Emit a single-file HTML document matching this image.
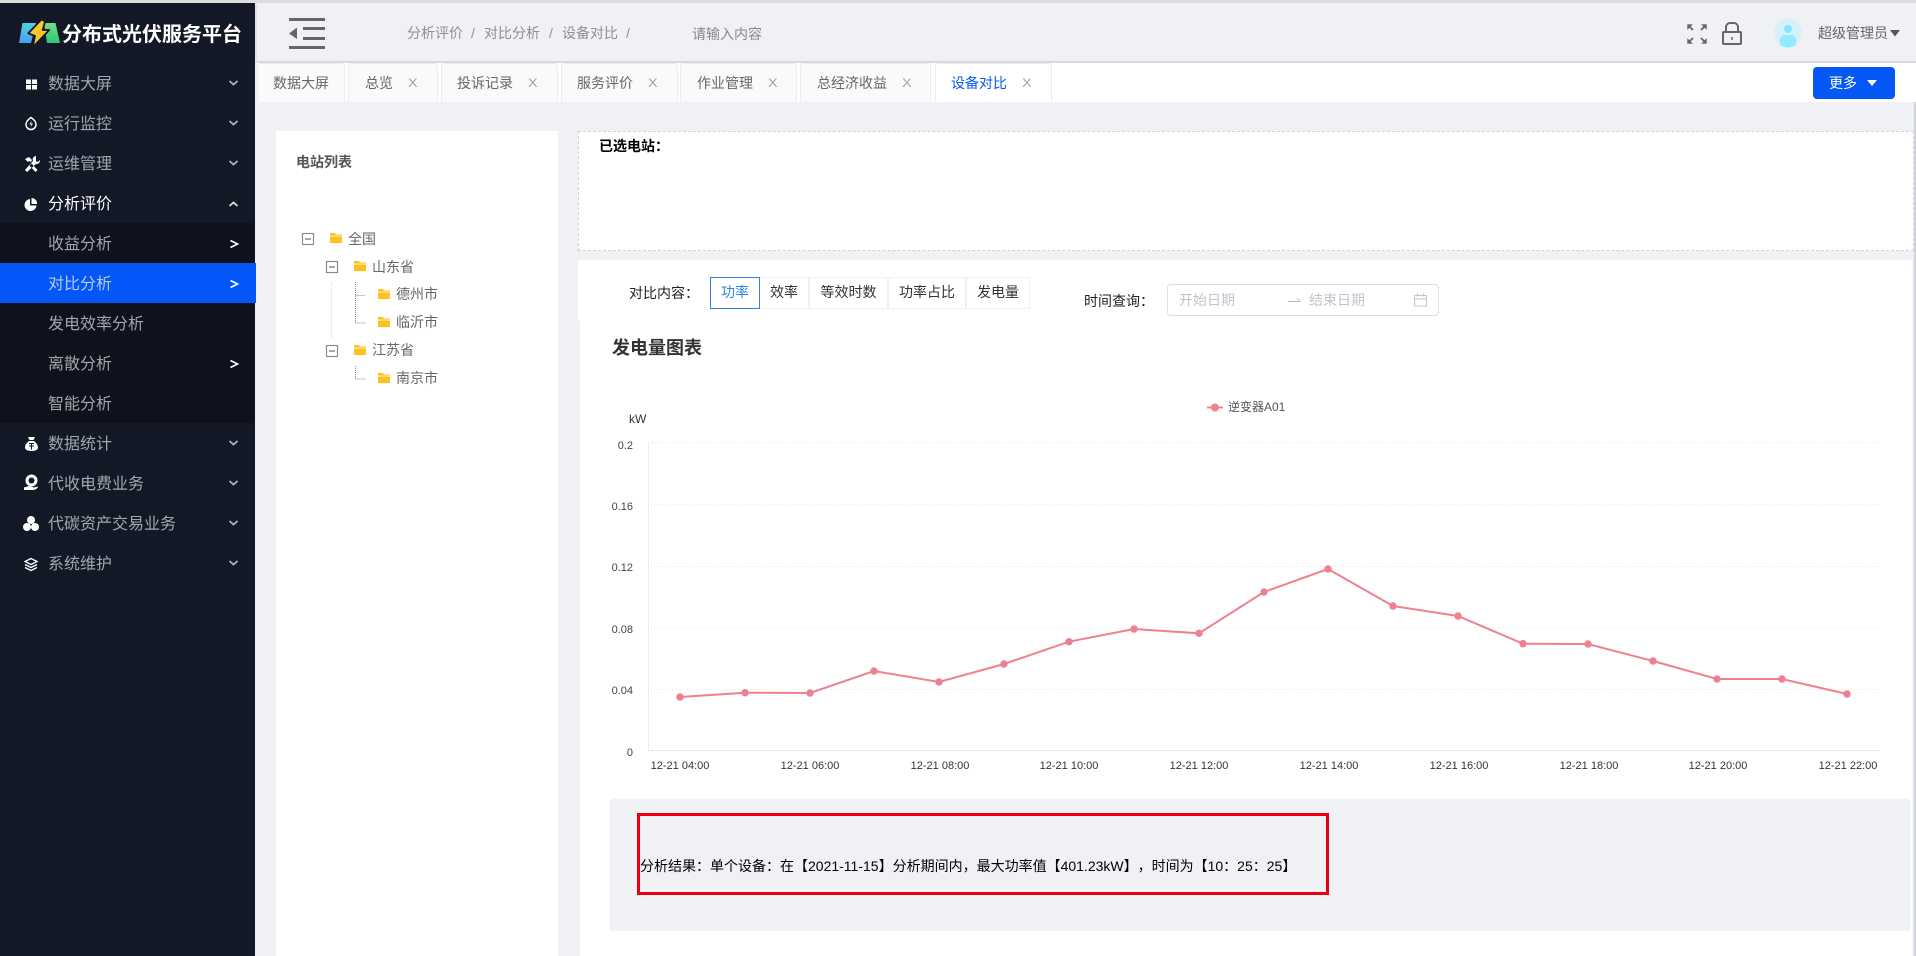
<!DOCTYPE html>
<html lang="zh-CN">
<head>
<meta charset="utf-8">
<title>设备对比</title>
<style>
*{box-sizing:border-box}
html,body{margin:0;padding:0;width:1916px;height:956px;overflow:hidden;background:#f0f1f5;font-family:"Liberation Sans","Noto Sans CJK SC",sans-serif;font-size:14px;color:#333;text-spacing-trim:space-all}
.a{position:absolute;white-space:nowrap}
.t{position:absolute;white-space:nowrap;line-height:20px;height:20px}
svg{position:absolute;display:block;overflow:visible}
.menu{color:#a3a6ab;font-size:16px;left:48px}
.tab{position:absolute;top:63px;height:39px;background:#fafafa;border:1px solid #ececec;border-bottom:0;border-radius:3px 3px 0 0}
.tabt{color:#666;top:73px}
.x{color:#a0a0a0;font-size:12px;top:73px;transform:scaleX(1.2);transform-origin:left center}
.tree{color:#666}
.seg{position:absolute;top:277px;height:32px;border:1px solid #eff0f4;background:#fff;color:#333;text-align:center;line-height:29px}
</style>
</head>
<body>
<!-- top bars -->
<div class="a" style="left:0;top:0;width:1916px;height:3px;background:#dcdcdc"></div>
<div class="a" style="left:255px;top:3px;width:2px;height:60px;background:#e2e2e2"></div>
<div class="a" style="left:257px;top:61px;width:1659px;height:2px;background:#d9d9d9"></div>
<div class="a" style="left:257px;top:63px;width:1659px;height:39px;background:#fff"></div>

<!-- sidebar -->
<div class="a" style="left:0;top:3px;width:255px;height:953px;background:#131826"></div>
<div class="a" style="left:0;top:223px;width:255px;height:200px;background:#0f121c"></div>
<div class="a" style="left:0;top:263px;width:256px;height:40px;background:#0356f7"></div>

<svg style="left:18px;top:17px" width="44" height="32" viewBox="0 0 44 32">
  <defs><linearGradient id="b" x1="0" y1="0" x2="0" y2="1"><stop offset="0" stop-color="#4fd2e4"/><stop offset="1" stop-color="#4b9df2"/></linearGradient>
  <linearGradient id="g" x1="0" y1="0" x2="0" y2="1"><stop offset="0" stop-color="#6fe08c"/><stop offset="1" stop-color="#2fc873"/></linearGradient></defs>
  <path d="M4.500 6H18L13 26H1Z" fill="url(#b)"/>
  <path d="M26 6H37.500L42 26H29Z" fill="url(#g)"/>
  <path d="M23.700 2.300L10.300 16.300L17 19L14.700 30.300L31.300 13H24.700L27 4.700Z" fill="#fdc72c" stroke="#131826" stroke-width="1.800" stroke-linejoin="round"/>
</svg>
<div class="t" style="left:62px;top:25px;color:#fff;font-size:20px;font-weight:bold">分布式光伏服务平台</div>

<div class="t menu" style="top:75px">数据大屏</div>
<div class="t menu" style="top:115px">运行监控</div>
<div class="t menu" style="top:155px">运维管理</div>
<div class="t menu" style="top:195px;color:#fff">分析评价</div>
<div class="t menu" style="top:235px">收益分析</div>
<div class="t menu" style="top:275px;color:#b5cdf7">对比分析</div>
<div class="t menu" style="top:315px">发电效率分析</div>
<div class="t menu" style="top:355px">离散分析</div>
<div class="t menu" style="top:395px">智能分析</div>
<div class="t menu" style="top:435px">数据统计</div>
<div class="t menu" style="top:475px">代收电费业务</div>
<div class="t menu" style="top:515px">代碳资产交易业务</div>
<div class="t menu" style="top:555px">系统维护</div>

<!-- sidebar icons -->
<svg style="left:0;top:0" width="255" height="600" viewBox="0 0 255 600" fill="#fff">
  <rect x="26" y="79.500" width="5" height="4.500"/><rect x="32" y="79.500" width="5" height="4.500"/><rect x="26" y="85" width="5" height="4.500"/><rect x="32" y="85" width="5" height="4.500"/>
  <path d="M31 117.500c-3 2-5 4.500-5 7a5 5 0 0 0 10 0c0-2.500-2-5-5-7z" fill="none" stroke="#fff" stroke-width="1.500"/>
  <path d="M31.500 120.500l-2 4h2l-1 3 2.500-4h-2z"/>
  <path d="M25 159l4-2 3 3-1 2-2-1-1 1-3-3zM31.500 163.500l6 6.500-2 2-6-6.500zM36 156a3.500 3.500 0 0 0-3 5l-8 9 2 2 9-8a3.500 3.500 0 0 0 4-4l-2 2-2-1 0-2z"/>
  <path d="M30 199a6 6 0 1 0 6.500 6.500H30zM31.500 198v6H37a5.500 5.500 0 0 0-5.500-6z"/>
  <path d="M28 437h7l-1.500 3h-4zM29 441h5c2 1.500 4 4 4 6.500 0 2-2 3.500-6.500 3.500S25 449.500 25 447.500c0-2.500 2-5 4-6.500z"/>
  <path d="M29 443.500h5M29 446h5M31.500 443.500v6" stroke="#131826" stroke-width="1" fill="none"/>
  <circle cx="31.500" cy="480.500" r="6"/>
  <circle cx="31.500" cy="480.500" r="3" fill="#131826"/>
  <path d="M24 487.500l5-1.500 5 1.500 4-1c0 2-3 3.500-5.500 3.500H24z"/>
  <circle cx="31" cy="520" r="4"/><circle cx="27" cy="527" r="4"/><circle cx="35" cy="527" r="4"/>
  <g fill="none" stroke="#fff" stroke-width="1.300">
    <path d="M31 558.500l6 3-6 3-6-3z"/><path d="M25 564.500l6 3 6-3"/><path d="M25 567.500l6 3 6-3"/>
  </g>
  <g fill="none" stroke="#b0b2b6" stroke-width="1.800">
    <path d="M229.500 81l4 3.500 4-3.500"/><path d="M229.500 121l4 3.500 4-3.500"/><path d="M229.500 161l4 3.500 4-3.500"/>
    <path d="M229.500 206l4-3.500 4 3.500" stroke="#ddd"/>
    <path d="M229.500 441l4 3.500 4-3.500"/><path d="M229.500 481l4 3.500 4-3.500"/><path d="M229.500 521l4 3.500 4-3.500"/><path d="M229.500 561l4 3.500 4-3.500"/>
  </g>
  <g fill="none" stroke="#fff" stroke-width="1.600">
    <path d="M230.500 240.500l7 3.500-7 3.500"/><path d="M230.500 280.500l7 3.500-7 3.500"/><path d="M230.500 360.500l7 3.500-7 3.500"/>
  </g>
</svg>

<!-- header -->
<svg style="left:289px;top:17px" width="36" height="32" viewBox="0 0 36 32" fill="#666">
  <rect x="0" y="1" width="36" height="3"/><rect x="14" y="10" width="22" height="3"/><rect x="14" y="20" width="22" height="3"/><rect x="0" y="29" width="36" height="3"/>
  <path d="M8 10.500V22L0 16.500z"/>
</svg>
<div class="t" style="left:407px;top:23px;color:#8d8f94">分析评价</div>
<div class="t" style="left:471px;top:23px;color:#8d8f94">/</div>
<div class="t" style="left:484px;top:23px;color:#8d8f94">对比分析</div>
<div class="t" style="left:549px;top:23px;color:#8d8f94">/</div>
<div class="t" style="left:562px;top:23px;color:#8d8f94">设备对比</div>
<div class="t" style="left:626px;top:23px;color:#8d8f94">/</div>
<div class="t" style="left:692px;top:24px;color:#888">请输入内容</div>

<svg style="left:1687px;top:24px" width="20" height="20" viewBox="0 0 20 20" fill="#666" stroke="#666" stroke-width="1.800">
  <path d="M1 1l5 5M19 1l-5 5M1 19l5-5M19 19l-5-5" fill="none"/>
  <path d="M0.500 0.500h5l-5 5zM19.500 0.500h-5l5 5zM0.500 19.500h5l-5-5zM19.500 19.500h-5l5-5z" stroke-width=".4"/>
</svg>
<svg style="left:1722px;top:22px" width="20" height="23" viewBox="0 0 20 23" fill="none" stroke="#666" stroke-width="2">
  <rect x="1" y="10" width="18" height="12" rx="1"/>
  <path d="M4 10V5a4 4 0 0 1 4-4h4a4 4 0 0 1 4 4v5"/>
  <path d="M10 15v3" stroke-width="1.500"/>
</svg>
<svg style="left:1774px;top:19px" width="28" height="28" viewBox="0 0 28 28">
  <circle cx="14" cy="14" r="14" fill="#d5f0f8"/>
  <circle cx="14" cy="10" r="4" fill="#86e6fe"/>
  <path d="M6 26v-6a5 5 0 0 1 5-4h6a5 5 0 0 1 5 4v6a14 14 0 0 1-16 0z" fill="#93eaff"/>
</svg>
<div class="t" style="left:1818px;top:23px;color:#666">超级管理员</div>
<svg style="left:1890px;top:30px" width="10" height="7" viewBox="0 0 10 7"><path d="M0 0h10L5 6.500z" fill="#555"/></svg>

<!-- tabs -->
<div class="tab" style="left:257px;width:88px"></div>
<div class="t tabt" style="left:273px">数据大屏</div>
<div class="tab" style="left:348px;width:90px"></div>
<div class="t tabt" style="left:365px">总览</div><div class="t x" style="left:408px">X</div>
<div class="tab" style="left:441px;width:117px"></div>
<div class="t tabt" style="left:457px">投诉记录</div><div class="t x" style="left:528px">X</div>
<div class="tab" style="left:561px;width:117px"></div>
<div class="t tabt" style="left:577px">服务评价</div><div class="t x" style="left:648px">X</div>
<div class="tab" style="left:680px;width:117px"></div>
<div class="t tabt" style="left:697px">作业管理</div><div class="t x" style="left:768px">X</div>
<div class="tab" style="left:800px;width:131px"></div>
<div class="t tabt" style="left:817px">总经济收益</div><div class="t x" style="left:902px">X</div>
<div class="tab" style="left:935px;width:117px;background:#fff"></div>
<div class="t tabt" style="left:951px;color:#0558f5">设备对比</div><div class="t x" style="left:1022px">X</div>

<div class="a" style="left:1813px;top:67px;width:82px;height:32px;background:#0558f5;border-radius:4px"></div>
<div class="t" style="left:1829px;top:73px;color:#fff">更多</div>
<svg style="left:1867px;top:80px" width="10" height="7" viewBox="0 0 10 7"><path d="M0 0h10L5 6z" fill="#fff"/></svg>

<!-- scrollbar -->
<div class="a" style="left:1914px;top:102px;width:2px;height:854px;background:#cfd2d6"></div>

<!-- tree panel -->
<div class="a" style="left:276px;top:131px;width:282px;height:825px;background:#fff"></div>
<div class="t" style="left:296px;top:152px;color:#555;font-weight:bold">电站列表</div>

<svg style="left:0;top:0" width="600" height="400" viewBox="0 0 600 400">
  <g fill="#fff" stroke="#8a8a8a" stroke-width="1.200">
    <rect x="302.500" y="233.500" width="11" height="11"/>
    <rect x="326.500" y="261.500" width="11" height="11"/>
    <rect x="326.500" y="345.500" width="11" height="11"/>
  </g>
  <g stroke="#8a8a8a" stroke-width="1.500">
    <path d="M305 239h6M329 267h6M329 351h6"/>
  </g>
  <g fill="#fdc21f">
    <path d="M330 233h5l1 1.500h6V243h-12z"/>
    <path d="M354 261h5l1 1.500h6V271h-12z"/>
    <path d="M378 289h5l1 1.500h6V299h-12z"/>
    <path d="M378 317h5l1 1.500h6V327h-12z"/>
    <path d="M354 345h5l1 1.500h6V355h-12z"/>
    <path d="M378 373h5l1 1.500h6V383h-12z"/>
  </g>
  <g stroke="#fff" stroke-width=".8">
    <path d="M330 236h12M354 264h12M378 292h12M378 320h12M354 348h12M378 376h12"/>
  </g>
  <g fill="none" stroke-width="1" stroke-dasharray="1 1">
    <path d="M331.500 282v56" stroke="#d8d8d8"/>
    <path d="M355.500 282v41h10M355.500 295.500h10M355.500 366v13h10" stroke="#888"/>
  </g>
</svg>
<div class="t tree" style="left:348px;top:229px">全国</div>
<div class="t tree" style="left:372px;top:257px">山东省</div>
<div class="t tree" style="left:396px;top:284px">德州市</div>
<div class="t tree" style="left:396px;top:312px">临沂市</div>
<div class="t tree" style="left:372px;top:340px">江苏省</div>
<div class="t tree" style="left:396px;top:368px">南京市</div>

<!-- selected -->
<div class="a" style="left:578px;top:131px;width:1336px;height:120px;background:#fff;border:1px dashed #d2d2d2"></div>
<div class="t" style="left:599px;top:136px;color:#000;font-weight:bold;font-size:14px">已选电站：</div>

<!-- filter + chart panels -->
<div class="a" style="left:578px;top:260px;width:1334px;height:61px;background:#fff"></div>
<div class="a" style="left:580px;top:321px;width:1332px;height:635px;background:#fff"></div>

<div class="t" style="left:629px;top:283px;color:#222">对比内容：</div>
<div class="seg" style="left:710px;width:50px;border-color:#2f84e2;color:#2f84e2;z-index:2">功率</div>
<div class="seg" style="left:759px;width:50px">效率</div>
<div class="seg" style="left:809px;width:79px">等效时数</div>
<div class="seg" style="left:888px;width:78px">功率占比</div>
<div class="seg" style="left:966px;width:64px">发电量</div>

<div class="t" style="left:1084px;top:291px;color:#222">时间查询：</div>
<div class="a" style="left:1167px;top:284px;width:272px;height:32px;border:1px solid #dcdfe6;border-radius:4px;background:#fff"></div>
<div class="t" style="left:1179px;top:290px;color:#c0c4cc">开始日期</div>
<svg style="left:1288px;top:296px" width="13" height="7" viewBox="0 0 13 7" fill="none" stroke="#b8bcc4"><path d="M0 5.500h12L9 2.500"/></svg>
<div class="t" style="left:1309px;top:290px;color:#c0c4cc">结束日期</div>
<svg style="left:1414px;top:293px" width="13" height="14" viewBox="0 0 13 14" fill="none" stroke="#c0c4cc"><rect x=".5" y="2.500" width="12" height="10.500"/><path d="M.5 6h12M3.500 .5v3M9.500 .5v3"/></svg>

<div class="t" style="left:612px;top:338px;font-size:18px;font-weight:bold;color:#333">发电量图表</div>

<!-- chart -->
<svg style="left:0;top:0" width="1916" height="956" viewBox="0 0 1916 956">
  <g stroke="#e8e8e8" stroke-width="1" stroke-dasharray="1 2" fill="none">
    <path d="M648 442.500H1880M648 504.500H1880M648 566.500H1880M648 627.500H1880M648 689.500H1880"/>
  </g>
  <path d="M648.500 442V750" stroke="#eceef4" fill="none"/>
  <path d="M648 750.500H1880" stroke="#e8e8ea" fill="none"/>
  <path d="M1207 407.500h16" stroke="#ef808f" stroke-width="2"/><circle cx="1215" cy="407.500" r="4" fill="#ef808f"/>
  <polyline fill="none" stroke="#ef808f" stroke-width="2" points="680,697 745,692.700 810,693 874,671 939,682 1004,664 1069,641.700 1134,629 1199,633.300 1264,592 1328,569 1393,606 1458,616 1523,643.700 1588,644 1653,661 1717,679 1782,679 1847,694"/>
  <g fill="#ef808f">
    <circle cx="680" cy="697" r="3.700"/><circle cx="745" cy="692.700" r="3.700"/><circle cx="810" cy="693" r="3.700"/><circle cx="874" cy="671" r="3.700"/><circle cx="939" cy="682" r="3.700"/><circle cx="1004" cy="664" r="3.700"/><circle cx="1069" cy="641.700" r="3.700"/><circle cx="1134" cy="629" r="3.700"/><circle cx="1199" cy="633.300" r="3.700"/><circle cx="1264" cy="592" r="3.700"/><circle cx="1328" cy="569" r="3.700"/><circle cx="1393" cy="606" r="3.700"/><circle cx="1458" cy="616" r="3.700"/><circle cx="1523" cy="643.700" r="3.700"/><circle cx="1588" cy="644" r="3.700"/><circle cx="1653" cy="661" r="3.700"/><circle cx="1717" cy="679" r="3.700"/><circle cx="1782" cy="679" r="3.700"/><circle cx="1847" cy="694" r="3.700"/>
  </g>
  <g font-family="Liberation Sans, Noto Sans CJK SC, sans-serif" font-size="11" fill="#444" text-anchor="end">
    <text x="633" y="449">0.2</text><text x="633" y="510">0.16</text><text x="633" y="571">0.12</text><text x="633" y="633">0.08</text><text x="633" y="694">0.04</text><text x="633" y="756">0</text>
  </g>
  <g font-family="Liberation Sans, Noto Sans CJK SC, sans-serif" font-size="11" fill="#333" text-anchor="middle">
    <text x="680" y="769">12-21 04:00</text><text x="810" y="769">12-21 06:00</text><text x="940" y="769">12-21 08:00</text><text x="1069" y="769">12-21 10:00</text><text x="1199" y="769">12-21 12:00</text><text x="1329" y="769">12-21 14:00</text><text x="1459" y="769">12-21 16:00</text><text x="1589" y="769">12-21 18:00</text><text x="1718" y="769">12-21 20:00</text><text x="1848" y="769">12-21 22:00</text>
  </g>
  <text x="1228" y="411" font-family="Liberation Sans, Noto Sans CJK SC, sans-serif" font-size="12" fill="#555">逆变器A01</text>
  <text x="629" y="423" font-family="Liberation Sans, Noto Sans CJK SC, sans-serif" font-size="12" fill="#333">kW</text>
</svg>

<!-- analysis -->
<div class="a" style="left:610px;top:799px;width:1300px;height:132px;background:#f0f1f5;border-radius:3px"></div>
<div class="a" style="left:637px;top:813px;width:692px;height:82px;border:3px solid #e60012"></div>
<div class="t" style="left:640px;top:856px;color:#000">分析结果：单个设备：在【2021-11-15】分析期间内，最大功率值【401.23kW】，时间为【10：25：25】</div>
</body>
</html>
